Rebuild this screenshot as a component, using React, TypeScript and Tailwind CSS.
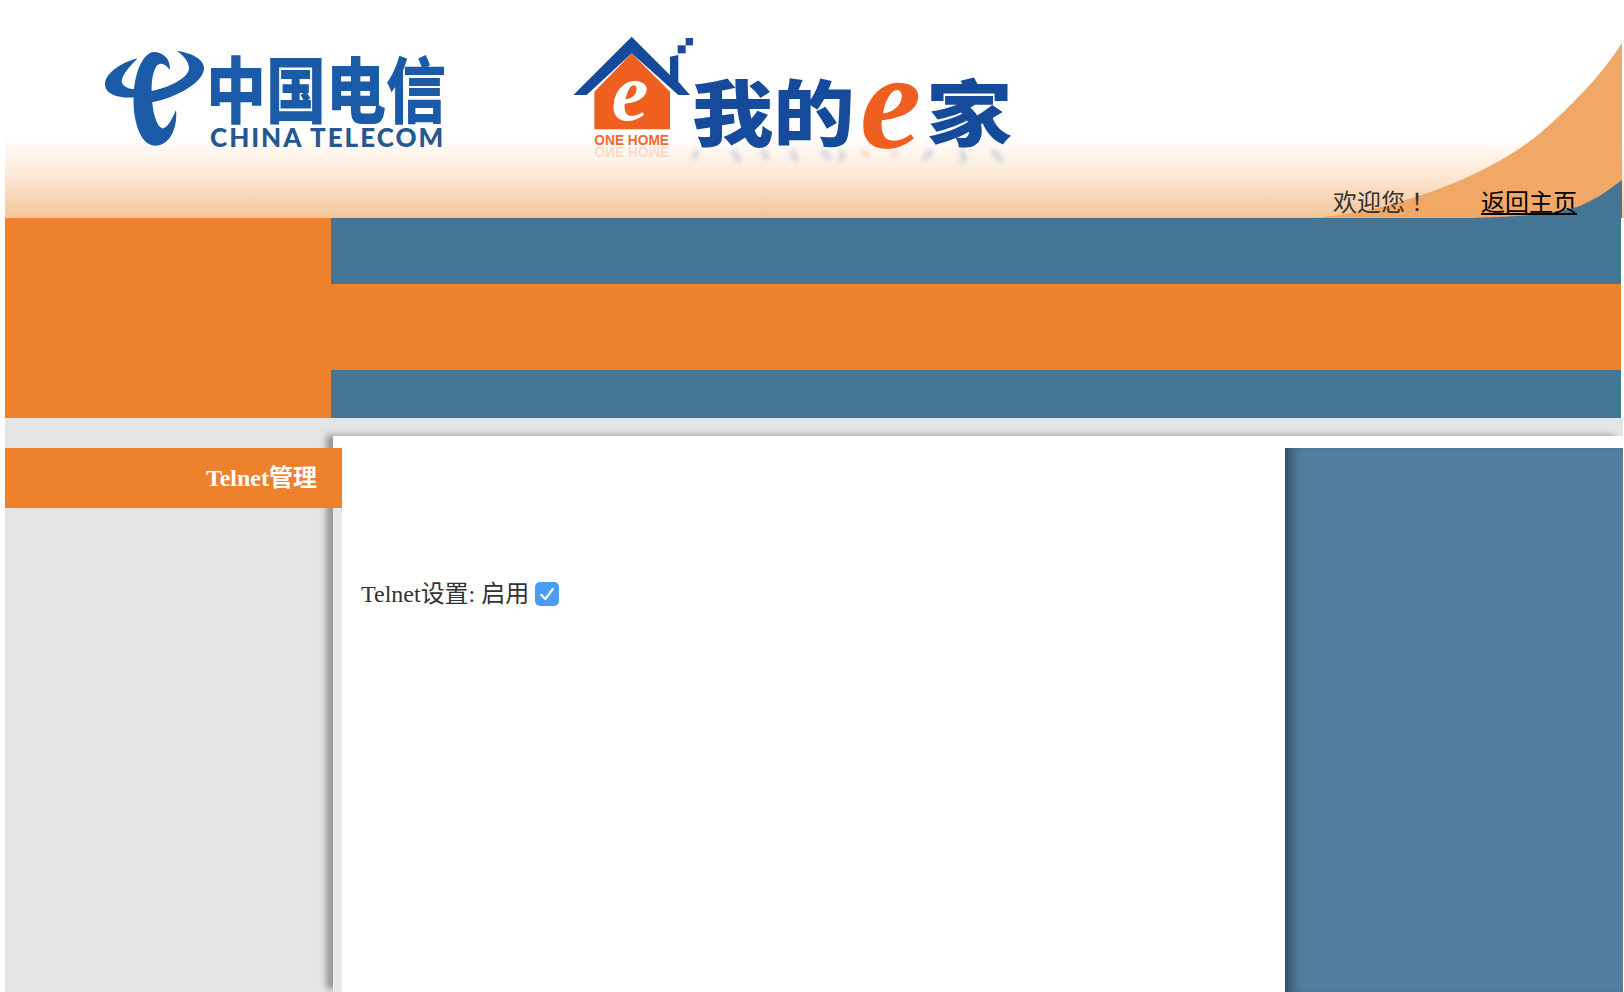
import React from 'react';

const CJK_SERIF = 'font-["Liberation_Serif","Noto_Sans_CJK_SC",serif]';

function TelecomMark() {
  return (
    <svg viewBox="0 0 360 345" className="w-[120px] h-[115px] shrink-0" fill="#1a5aa6">
      <path d="M128 55C70 70 28 105 30 135C32 165 75 176 120 172L128 146C105 150 80 140 80 122C84 102 105 78 128 55Z" />
      <path d="M175 36C205 36 228 58 224 90C212 72 198 66 186 76C168 100 168 150 172 190C176 235 192 268 205 265C222 258 232 235 243 210C248 250 232 317 180 317C132 317 112 230 116 165C118 110 138 42 175 36Z" />
      <path d="M245 33C290 38 327 58 327 85C327 125 250 172 170 187L168 153C215 146 282 115 282 85C282 65 265 45 245 33Z" />
    </svg>
  );
}

function HouseMark() {
  return (
    <svg viewBox="0 0 405 405" className="w-[135px] h-[135px] shrink-0">
      <path d="M200 70L88 185V298H315V185Z" fill="#ef5f1f" />
      <path d="M25 195L200 20L315 135V80L340 75V155L375 195H340L200 70L65 195Z" fill="#164b9c" />
      <rect x="338" y="46" width="24" height="24" fill="#164b9c" />
      <rect x="362" y="24" width="22" height="22" fill="#164b9c" />
      <text x="195" y="270" textAnchor="middle" fontFamily="Liberation Serif" fontStyle="italic" fontWeight="700" fontSize="250" fill="#fff">e</text>
      <text x="88" y="345" textLength="224" lengthAdjust="spacingAndGlyphs" fontFamily="Liberation Sans" fontWeight="700" fontSize="42" fill="#ef6a30">ONE HOME</text>
      <text x="88" y="-352" textLength="224" lengthAdjust="spacingAndGlyphs" fontFamily="Liberation Sans" fontWeight="700" fontSize="42" fill="#ef6a30" opacity="0.2" transform="scale(1,-1)">ONE HOME</text>
    </svg>
  );
}

function Header() {
  return (
    <header className="relative h-[218px] bg-gradient-to-b from-white from-[62%] via-[#fde9d8] via-[80%] to-[#f3c596] flex items-start overflow-hidden">
      {/* corner swoosh */}
      <svg viewBox="0 0 314 175" className="absolute right-[2px] bottom-0 w-[314px] h-[175px]" preserveAspectRatio="none">
        <path d="M0 175C70 172 170 140 230 92C265 62 295 30 314 0V175Z" fill="#f1a765" />
        <path d="M163 175C200 174 240 172 269 164C285 158 300 148 314 137V175Z" fill="#457595" />
      </svg>

      <div className="relative ml-[90px] mt-[40px] flex items-start">
        <TelecomMark />
        <div className="-ml-[9px] w-[240px] pt-[10px]">
          <div className='font-["Noto_Sans_CJK_SC",sans-serif] font-black text-[60px] leading-[72px] text-[#1a5aa6] whitespace-nowrap scale-y-[1.2]'>中国电信</div>
          <div className='mt-[2px] ml-[4px] font-["Lato",sans-serif] font-black text-[26px] leading-[26px] tracking-[2px] text-[#24588f] whitespace-nowrap'>CHINA TELECOM</div>
        </div>
      </div>

      <div className="relative ml-[119px] mt-[30px] flex items-start">
        <HouseMark />
        <div className='relative -ml-[8px] mt-[37px] flex items-center font-["Noto_Sans_CJK_SC",sans-serif] font-black text-[#164b9c] text-[72px] leading-[84px] whitespace-nowrap'>
          <span className="inline-block w-[168px] scale-x-[1.13] origin-left">我的</span>
          <span className='w-[66px] -mt-[14px] font-["Liberation_Serif",serif] font-bold italic text-[#ef5f1f] text-[138px] leading-[84px]'>e</span>
          <span className="inline-block w-[86px] scale-x-[1.2] origin-left">家</span>
          {/* faint reflection under the wordmark */}
          <svg viewBox="0 0 320 22" className="absolute left-0 top-[80px] w-[320px] h-[22px] blur-[2.5px] opacity-20" fill="none" stroke="#164b9c" strokeWidth="5">
            <path d="M6 3L2 12M40 3L48 14M70 3L76 12M100 3L104 14M130 3L138 12M150 3L150 14" />
            <path d="M170 3L176 10M205 3L200 10" stroke="#ef5f1f" />
            <path d="M240 3L232 12M270 3L272 16M300 3L310 14" />
          </svg>
        </div>
      </div>

      <div className={`absolute left-[1328px] top-[188px] flex text-[24px] leading-[30px] text-[#333] ${CJK_SERIF}`}>
        <span className="w-[148px]">欢迎您<span className="ml-[6px]">！</span></span>
        <a className="text-black underline">返回主页</a>
      </div>
    </header>
  );
}

function Bars() {
  return (
    <div className="flex h-[200px]">
      <div className="w-[326px] bg-[#ee812b]" />
      <div className="w-[1290px] flex flex-col">
        <div className="h-[66px] bg-[#457595]" />
        <div className="h-[86px] bg-[#ee812b]" />
        <div className="h-[48px] bg-[#457595]" />
      </div>
    </div>
  );
}

export default function App() {
  return (
    <div className={`h-[992px] overflow-hidden bg-white pl-[5px] ${CJK_SERIF}`}>
      <Header />
      <Bars />
      <div className="flex h-[574px] w-[1618px] bg-[#e5e5e5]">
        <aside className="relative z-10 w-[328px] shrink-0 pt-[30px]">
          <div className="w-[337px] h-[60px] bg-[#ee812b] text-white font-bold text-[24px] leading-[60px] text-right pr-[25px]">
            Telnet管理
          </div>
        </aside>
        <main className="mt-[18px] flex-1 flex bg-white shadow-[-8px_-2px_6px_-1px_#999]">
          {/* light gutter beside the sidebar */}
          <div className="w-[9px] mt-[71px] bg-[#e8e8e8]" />
          <div className="flex-1 pl-[19px] pt-[146px]">
            <div className="flex items-center text-[24px] leading-[24px] text-[#333]">
              <span>Telnet设置: 启用</span>
              <span className="ml-[6px] w-[24px] h-[24px] rounded-[5px] bg-[#4a9cf5] flex items-center justify-center">
                <svg viewBox="0 0 24 24" className="w-[20px] h-[20px]" fill="none" stroke="#fff" strokeWidth="2.6" strokeLinecap="round" strokeLinejoin="round">
                  <path d="M5 13l5 5 9-12" />
                </svg>
              </span>
            </div>
          </div>
          <div className="mt-[12px] w-[338px] bg-[#537e9f] shadow-[inset_14px_0_12px_-8px_#2f4a60]" />
        </main>
      </div>
    </div>
  );
}
